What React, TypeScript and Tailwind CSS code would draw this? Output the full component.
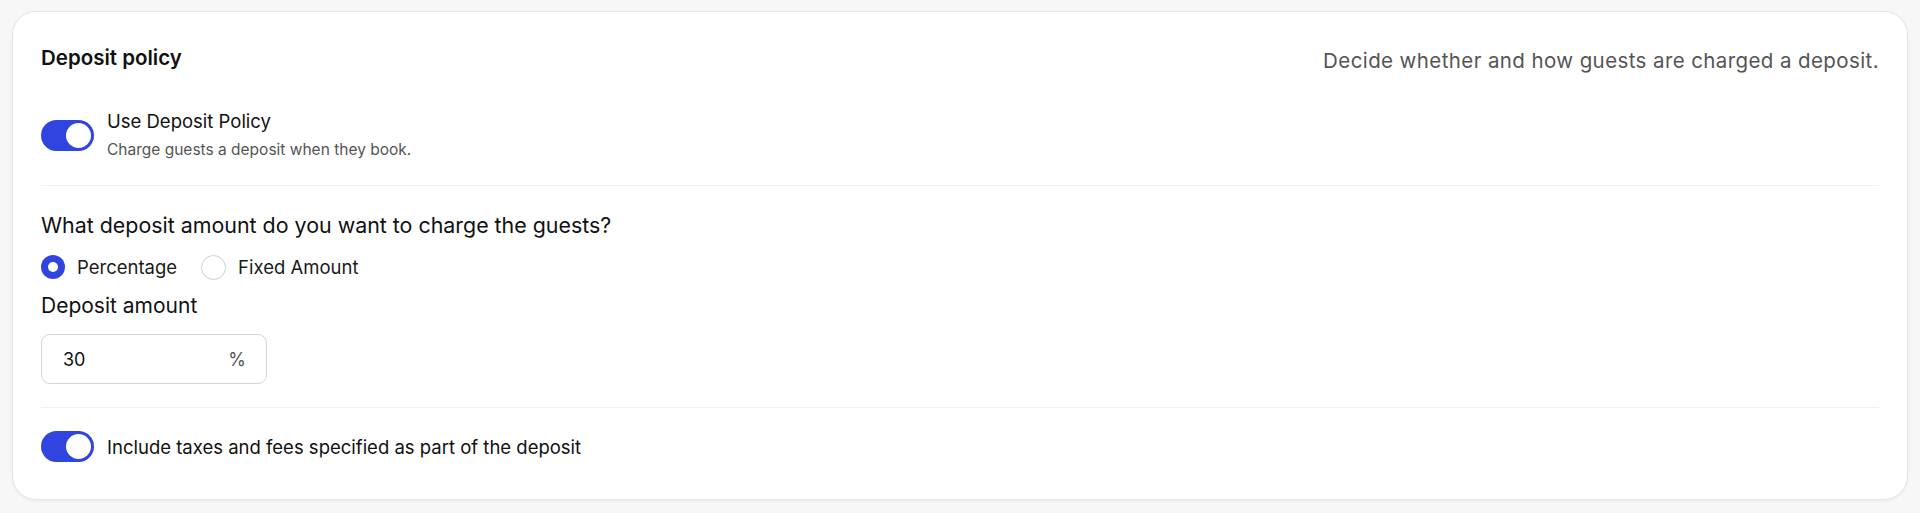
import React from "react";

function Toggle() {
  return (
    <div className="flex h-[31px] w-[53px] shrink-0 items-center justify-end rounded-full bg-[#3045e0] px-[3px]">
      <div className="h-[25px] w-[25px] rounded-full bg-white" />
    </div>
  );
}

function Radio({ checked, label }: { checked?: boolean; label: string }) {
  return (
    <div className="flex items-center gap-[12px]">
      {checked ? (
        <div className="flex h-[24px] w-[24px] items-center justify-center rounded-full bg-[#3045e0]">
          <div className="h-[10px] w-[10px] rounded-full bg-white" />
        </div>
      ) : (
        <div className="h-[25px] w-[25px] rounded-full border border-[#cfcfcf] bg-white" />
      )}
      <span className="text-[18.5px] leading-[26px] text-[#1a1a1a]">{label}</span>
    </div>
  );
}

export default function App() {
  return (
    <div
      className="min-h-[513px] bg-[#f7f7f7] p-[12px] pt-[11px]"
      style={{ fontFamily: "Inter, 'Noto Sans', sans-serif" }}
    >
      <div className="flex h-[489px] flex-col rounded-[24px] border border-[#e6e6e6] bg-white px-[28px] pt-[32px] shadow-[0_1px_3px_rgba(0,0,0,0.06)]">
        <div className="flex items-start justify-between">
          <h2 className="text-[20.5px] font-semibold leading-[28px] text-[#111]">
            Deposit policy
          </h2>
          <p className="mt-[3px] text-[20.5px] leading-[28px] tracking-[0.4px] text-[#555]">
            Decide whether and how guests are charged a deposit.
          </p>
        </div>

        <div className="mt-[33px] flex items-start gap-[13px]">
          <div className="pt-[12px]">
            <Toggle />
          </div>
          <div className="flex flex-col">
            <span className="text-[18.5px] leading-[26px] text-[#111]">Use Deposit Policy</span>
            <span className="mt-[4px] text-[15.5px] leading-[24px] text-[#555]">
              Charge guests a deposit when they book.
            </span>
          </div>
        </div>

        <div className="mt-[23px] h-px w-full bg-[#f0f0f0]" />

        <h3 className="mt-[24px] text-[21.4px] leading-[30px] text-[#111]">
          What deposit amount do you want to charge the guests?
        </h3>
        <div className="mt-[14px] flex items-center gap-[24px]">
          <Radio checked label="Percentage" />
          <Radio label="Fixed Amount" />
        </div>
        <h3 className="mt-[11px] text-[21px] leading-[30px] text-[#111]">Deposit amount</h3>
        <div className="mt-[13px] flex h-[50px] w-[226px] items-center justify-between rounded-[9px] border border-[#d6d6d6] pl-[21px] pr-[20px]">
          <span className="text-[18px] text-[#111]">30</span>
          <span className="text-[18px] text-[#555]">%</span>
        </div>

        <div className="mt-[23px] h-px w-full bg-[#f0f0f0]" />

        <div className="mt-[23px] flex items-center gap-[13px]">
          <Toggle />
          <span className="text-[18.5px] leading-[26px] text-[#111]">
            Include taxes and fees specified as part of the deposit
          </span>
        </div>
      </div>
    </div>
  );
}
